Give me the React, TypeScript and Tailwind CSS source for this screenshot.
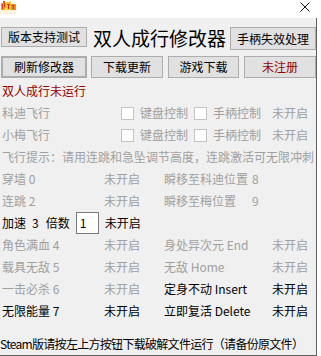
import React from "react";

// disabled labels on the form use this grey
const dim = "text-[#a0a0a0]";

const Btn: React.FC<{ className: string; children: React.ReactNode }> = ({ className, children }) => (
  <div className={`flex shrink-0 items-center justify-center bg-[#e1e1e1] border border-[#adadad] text-[12px] leading-none ${className}`}>
    {children}
  </div>
);

const Box: React.FC = () => (
  <div className="w-[13px] h-[13px] shrink-0 bg-white border border-[#c4c4c4]" />
);

const Icon: React.FC = () => (
  <svg width="16" height="13" viewBox="0 0 16 13" shapeRendering="crispEdges">
    <rect x="0" y="9" width="16" height="4" fill="#fbf3dc" />
    <rect x="1" y="2" width="5" height="7" fill="#f7a21b" />
    <rect x="6" y="1" width="5" height="8" fill="#f9c22e" />
    <rect x="11" y="3" width="5" height="6" fill="#f58a1f" />
    <rect x="2" y="3" width="1" height="5" fill="#d8301c" />
    <rect x="4" y="2" width="1" height="4" fill="#d8301c" />
    <rect x="7" y="3" width="3" height="1" fill="#d8301c" />
    <rect x="8" y="4" width="1" height="4" fill="#c8261a" />
    <rect x="12" y="4" width="2" height="1" fill="#d8301c" />
    <rect x="13" y="5" width="1" height="3" fill="#d8301c" />
    <rect x="3" y="0" width="2" height="2" fill="#e8561d" />
    <rect x="9" y="0" width="2" height="1" fill="#fde36a" />
    <rect x="5" y="7" width="2" height="2" fill="#fde36a" />
  </svg>
);

const Row: React.FC<{ children: React.ReactNode; className?: string }> = ({ children, className = "" }) => (
  <div className={`flex h-[22px] shrink-0 items-center pl-[2px] text-[12px] leading-none whitespace-pre ${className}`}>
    {children}
  </div>
);

const App: React.FC = () => {
  return (
    <div className="w-[321px] h-[356px] bg-white flex flex-col overflow-hidden font-['Noto_Sans_CJK_SC','Microsoft_YaHei',sans-serif] text-black">
      {/* title bar */}
      <div className="h-[18px] shrink-0 flex items-start justify-between pl-[0px] pr-[11px]">
        <div className="pt-[1px]">
          <Icon />
        </div>
        <svg width="10" height="10" viewBox="0 0 10 10" className="mt-[2px]">
          <path d="M0.5 0.5 L9.5 9.5 M9.5 0.5 L0.5 9.5" stroke="#111" strokeWidth="1" />
        </svg>
      </div>

      <div className="w-[317px] h-[338px] bg-[#f0f0f0] border-r border-b border-[#5f5f5f] flex flex-col">
        {/* top buttons */}
        <div className="flex items-start mt-[9px] pl-[1px] h-[23px]">
          <Btn className="w-[86px] h-[20px]">版本支持测试</Btn>
          <div className="ml-[5px] w-[138px] text-[19px] leading-none pt-[1px] pl-[1px] whitespace-nowrap">双人成行修改器</div>
          <Btn className="w-[86px] h-[23px]">手柄失效处理</Btn>
        </div>
        <div className="flex items-center mt-[6px] pl-[1px] h-[22px]">
          <Btn className="w-[86px] h-[22px] border-2 border-[#0078d7]">刷新修改器</Btn>
          <Btn className="w-[72px] h-[22px] ml-[4px]">下载更新</Btn>
          <Btn className="w-[71px] h-[22px] ml-[5px]">游戏下载</Btn>
          <Btn className="w-[72px] h-[22px] ml-[5px] text-[#900000]">未注册</Btn>
        </div>

        <div className="mt-[2px] flex flex-col">
          <Row className="text-[#900000]">双人成行未运行</Row>
          <Row className={dim}>
            <span className="w-[119px]">科迪飞行</span>
            <Box />
            <span className="w-[54px] ml-[6px]">键盘控制</span>
            <Box />
            <span className="w-[59px] ml-[6px]">手柄控制</span>
            <span>未开启</span>
          </Row>
          <Row className={dim}>
            <span className="w-[119px]">小梅飞行</span>
            <Box />
            <span className="w-[54px] ml-[6px]">键盘控制</span>
            <Box />
            <span className="w-[59px] ml-[6px]">手柄控制</span>
            <span>未开启</span>
          </Row>
          <Row className={dim}>飞行提示：请用连跳和急坠调节高度，连跳激活可无限冲刺</Row>
          <Row className={dim}>
            <span className="w-[102px]">穿墙 0</span>
            <span className="w-[60px]">未开启</span>
            <span className="w-[88px]">瞬移至科迪位置</span>
            <span>8</span>
          </Row>
          <Row className={dim}>
            <span className="w-[102px]">连跳 2</span>
            <span className="w-[60px]">未开启</span>
            <span className="w-[88px]">瞬移至梅位置</span>
            <span>9</span>
          </Row>
          <Row>
            <span>加速</span>
            <span className="ml-[6px]">3</span>
            <span className="ml-[7px]">倍数</span>
            <div className="ml-[6px] w-[23px] h-[22px] bg-white border border-[#7a7a7a] flex items-center pl-[3px]">1</div>
            <span className="ml-[6px]">未开启</span>
          </Row>
          <Row className={dim}>
            <span className="w-[102px]">角色满血 4</span>
            <span className="w-[60px]">未开启</span>
            <span className="w-[108px]">身处异次元 End</span>
            <span>未开启</span>
          </Row>
          <Row className={dim}>
            <span className="w-[102px]">载具无敌 5</span>
            <span className="w-[60px]">未开启</span>
            <span className="w-[108px]">无敌 Home</span>
            <span>未开启</span>
          </Row>
          <Row>
            <span className={`w-[102px] ${dim}`}>一击必杀 6</span>
            <span className={`w-[60px] ${dim}`}>未开启</span>
            <span className="w-[108px]">定身不动 Insert</span>
            <span>未开启</span>
          </Row>
          <Row>
            <span className="w-[102px]">无限能量 7</span>
            <span className="w-[60px]">未开启</span>
            <span className="w-[108px]">立即复活 Delete</span>
            <span>未开启</span>
          </Row>
        </div>

        <div className="mt-[11px] h-[22px] flex items-center text-[12px] leading-none tracking-[-0.7px] whitespace-nowrap">
          Steam版请按左上方按钮下载破解文件运行（请备份原文件）
        </div>
      </div>
    </div>
  );
};

export default App;
